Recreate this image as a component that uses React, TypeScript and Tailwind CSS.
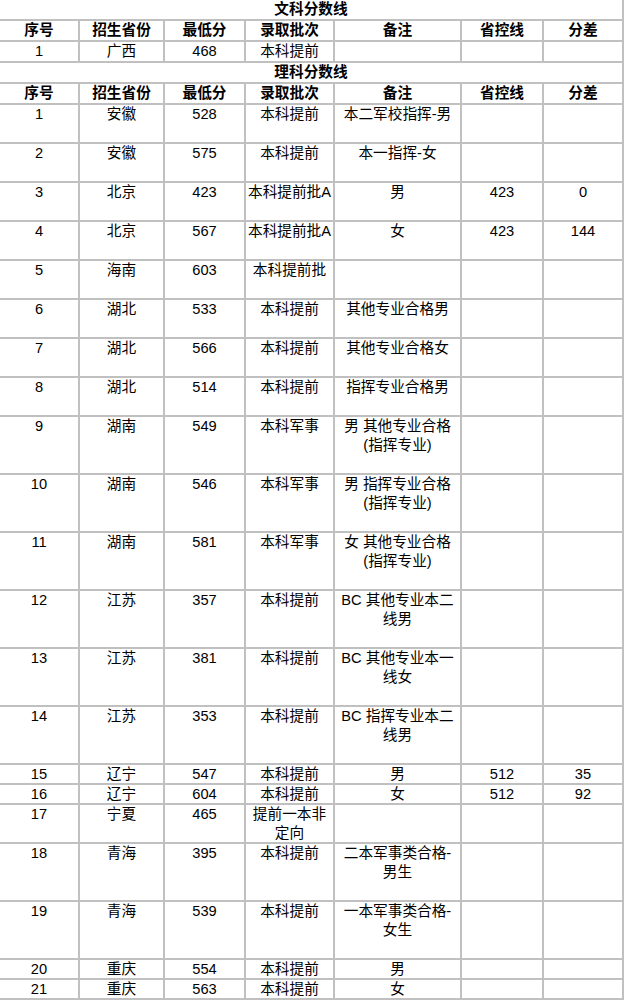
import React from "react";

type Row = {
  no: string;
  prov: string;
  min: string;
  batch: React.ReactNode;
  note?: React.ReactNode;
  line?: string;
  diff?: string;
  h: string;
};

const COLS = "grid grid-cols-[78px_83px_79px_87px_125px_80px_78px] gap-[2px]";

const HEADERS = ["序号", "招生省份", "最低分", "录取批次", "备注", "省控线", "分差"];

const ARTS: Row[] = [{ no: "1", prov: "广西", min: "468", batch: "本科提前", h: "h-[19px]" }];

const SCIENCE: Row[] = [
  { no: "1", prov: "安徽", min: "528", batch: "本科提前", note: "本二军校指挥-男", h: "h-[37px]" },
  { no: "2", prov: "安徽", min: "575", batch: "本科提前", note: "本一指挥-女", h: "h-[37px]" },
  { no: "3", prov: "北京", min: "423", batch: "本科提前批A", note: "男", line: "423", diff: "0", h: "h-[37px]" },
  { no: "4", prov: "北京", min: "567", batch: "本科提前批A", note: "女", line: "423", diff: "144", h: "h-[37px]" },
  { no: "5", prov: "海南", min: "603", batch: "本科提前批", h: "h-[37px]" },
  { no: "6", prov: "湖北", min: "533", batch: "本科提前", note: "其他专业合格男", h: "h-[37px]" },
  { no: "7", prov: "湖北", min: "566", batch: "本科提前", note: "其他专业合格女", h: "h-[37px]" },
  { no: "8", prov: "湖北", min: "514", batch: "本科提前", note: "指挥专业合格男", h: "h-[37px]" },
  { no: "9", prov: "湖南", min: "549", batch: "本科军事", note: <>男 其他专业合格<br />(指挥专业)</>, h: "h-[56px]" },
  { no: "10", prov: "湖南", min: "546", batch: "本科军事", note: <>男 指挥专业合格<br />(指挥专业)</>, h: "h-[56px]" },
  { no: "11", prov: "湖南", min: "581", batch: "本科军事", note: <>女 其他专业合格<br />(指挥专业)</>, h: "h-[56px]" },
  { no: "12", prov: "江苏", min: "357", batch: "本科提前", note: <>BC 其他专业本二<br />线男</>, h: "h-[56px]" },
  { no: "13", prov: "江苏", min: "381", batch: "本科提前", note: <>BC 其他专业本一<br />线女</>, h: "h-[56px]" },
  { no: "14", prov: "江苏", min: "353", batch: "本科提前", note: <>BC 指挥专业本二<br />线男</>, h: "h-[56px]" },
  { no: "15", prov: "辽宁", min: "547", batch: "本科提前", note: "男", line: "512", diff: "35", h: "h-[18px]" },
  { no: "16", prov: "辽宁", min: "604", batch: "本科提前", note: "女", line: "512", diff: "92", h: "h-[18px]" },
  { no: "17", prov: "宁夏", min: "465", batch: <>提前一本非<br />定向</>, h: "h-[37px]" },
  { no: "18", prov: "青海", min: "395", batch: "本科提前", note: <>二本军事类合格-<br />男生</>, h: "h-[56px]" },
  { no: "19", prov: "青海", min: "539", batch: "本科提前", note: <>一本军事类合格-<br />女生</>, h: "h-[56px]" },
  { no: "20", prov: "重庆", min: "554", batch: "本科提前", note: "男", h: "h-[18px]" },
  { no: "21", prov: "重庆", min: "563", batch: "本科提前", note: "女", h: "h-[18px]" },
];

function TitleRow({ text }: { text: string }) {
  return <div className="h-[19px] bg-white text-center font-bold">{text}</div>;
}

function HeaderRow() {
  return (
    <div className={`${COLS} h-[19px]`}>
      {HEADERS.map((h) => (
        <div key={h} className="bg-white text-center font-bold">
          {h}
        </div>
      ))}
    </div>
  );
}

function DataRow({ row }: { row: Row }) {
  const cells = [row.no, row.prov, row.min, row.batch, row.note, row.line, row.diff];
  return (
    <div className={`${COLS} ${row.h}`}>
      {cells.map((c, i) => (
        <div key={i} className="bg-white text-center whitespace-nowrap overflow-hidden">
          {c}
        </div>
      ))}
    </div>
  );
}

export default function App() {
  return (
    <div className="min-h-screen bg-white text-black text-[11pt] leading-[19px] font-['Liberation_Sans','Noto_Sans_CJK_SC',sans-serif]">
      <div className="w-[624px] flex flex-col gap-[2px] bg-[#c0c0c0] pr-[2px] pb-[2px]">
        <TitleRow text="文科分数线" />
        <HeaderRow />
        {ARTS.map((r) => (
          <DataRow key={"a" + r.no} row={r} />
        ))}
        <TitleRow text="理科分数线" />
        <HeaderRow />
        {SCIENCE.map((r) => (
          <DataRow key={"s" + r.no} row={r} />
        ))}
      </div>
    </div>
  );
}
